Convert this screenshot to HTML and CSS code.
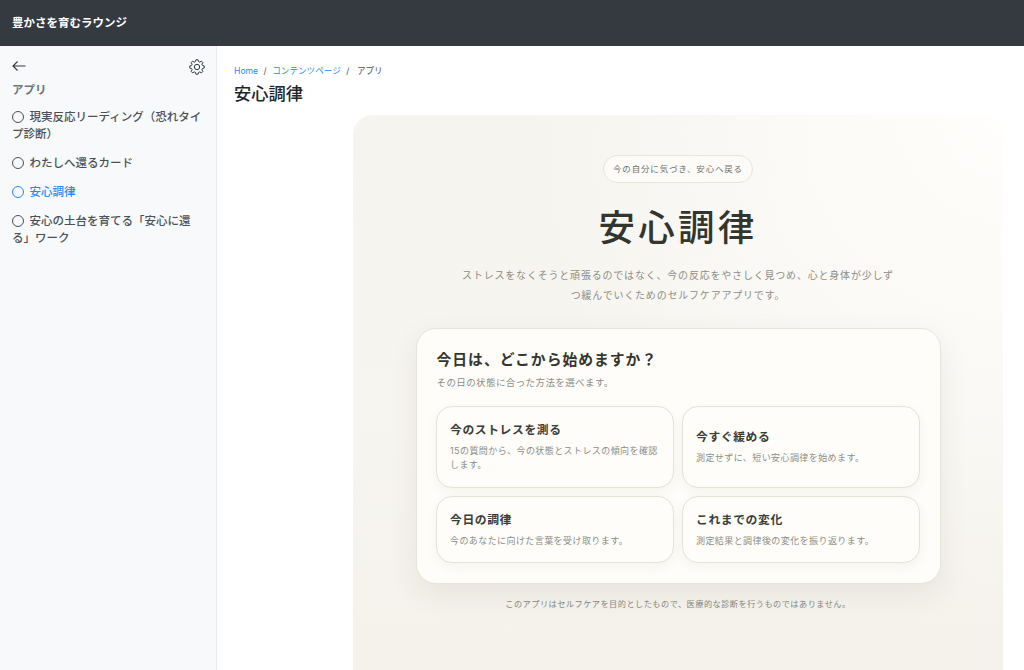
FILE: index.html
```html
<!DOCTYPE html>
<html lang="ja">
<head>
    <meta charset="UTF-8">
    <title>安心調律</title>
    <link rel="stylesheet" href="styles.css">
</head>
<body>
<header class="topbar">豊かさを育むラウンジ</header>
<div class="layout">
    <aside class="sidebar">
        <div class="side-tools">
            <svg class="icon-back" width="14" height="12" viewBox="0 0 14 12" fill="none" stroke="#343a40" stroke-width="1.1"><path d="M13.500 6H1M5.500 1.500L1 6l4.500 4.500"/></svg>
            <svg class="icon-gear" width="16" height="16" viewBox="0 0 16 16" fill="none" stroke="#343a40" stroke-width="1" stroke-linejoin="round"><circle cx="8" cy="8" r="2.700"/><path d="M6.900.8h2.200l.4 1.800 1.300.5 1.600-1 1.500 1.500-1 1.600.5 1.300 1.800.4v2.200l-1.800.4-.5 1.300 1 1.600-1.500 1.500-1.600-1-1.300.5-.4 1.800H6.900l-.4-1.800-1.300-.5-1.600 1-1.500-1.500 1-1.600-.5-1.300-1.800-.4V6.900l1.800-.4.5-1.300-1-1.600 1.500-1.500 1.600 1 1.300-.5z"/></svg>
        </div>
        <div class="side-title">アプリ</div>
        <ul class="side-menu">
            <li><span class="dot"></span>現実反応リーディング（恐れタイプ診断）</li>
            <li><span class="dot"></span>わたしへ還るカード</li>
            <li class="active"><span class="dot"></span>安心調律</li>
            <li><span class="dot"></span>安心の土台を育てる「安心に還る」ワーク</li>
        </ul>
    </aside>
    <main class="content">
        <div class="crumbs"><a>Home</a><span>/</span><a>コンテンツページ</a><span class="last">/</span>アプリ</div>
        <h2 class="page-title">安心調律</h2>
        <section class="panel">
            <div class="pill">今の自分に気づき、安心へ戻る</div>
            <h1 class="hero">安心調律</h1>
            <p class="lead">ストレスをなくそうと頑張るのではなく、今の反応をやさしく見つめ、心と身体が少しずつ緩んでいくためのセルフケアアプリです。</p>
            <div class="start">
                <h3>今日は、どこから始めますか？</h3>
                <p class="start-sub">その日の状態に合った方法を選べます。</p>
                <div class="choices">
                    <div class="choice"><h4>今のストレスを測る</h4><p>15の質問から、今の状態とストレスの傾向を確認します。</p></div>
                    <div class="choice"><h4>今すぐ緩める</h4><p>測定せずに、短い安心調律を始めます。</p></div>
                    <div class="choice"><h4>今日の調律</h4><p>今のあなたに向けた言葉を受け取ります。</p></div>
                    <div class="choice"><h4>これまでの変化</h4><p>測定結果と調律後の変化を振り返ります。</p></div>
                </div>
            </div>
            <p class="note">このアプリはセルフケアを目的としたもので、医療的な診断を行うものではありません。</p>
        </section>
    </main>
</div>
</body>
</html>
```

FILE: styles.css
```css
* {
    box-sizing: border-box;
}
html, body {
    height: 100%;
}
body {
    margin: 0;
    overflow: hidden;
    font-family: "Inter", "Noto Sans CJK JP", sans-serif;
    background-color: #fff;
    color: #343a40;
}
.topbar {
    height: 46px;
    padding: 0 12px;
    line-height: 46px;
    background-color: #343a40;
    color: #fff;
    font-size: 11.5px;
    font-weight: 700;
}
.layout {
    display: flex;
    height: 624px;
    overflow: hidden;
}
.sidebar {
    width: 217px;
    flex-shrink: 0;
    padding: 12px 11px 0 12px;
    background-color: #f8f9fa;
    border-right: 1px solid #e9ecef;
}
.side-tools {
    display: flex;
    justify-content: space-between;
    align-items: center;
    height: 16px;
}
.icon-gear {
    margin-top: 1px;
}
.side-title {
    margin-top: 6px;
    font-size: 11.5px;
    line-height: 20px;
    font-weight: 700;
    color: #6c757d;
}
.side-menu {
    list-style: none;
    margin: 3px 0 0;
    padding: 0;
    font-size: 11.5px;
    font-weight: 500;
    line-height: 17px;
    color: #495057;
}
.side-menu li {
    padding: 6px 0;
}
.side-menu .active {
    color: #2b87f5;
}
.dot {
    display: inline-block;
    width: 12px;
    height: 12px;
    margin-right: 5.5px;
    vertical-align: -1.5px;
    border: 1px solid currentColor;
    border-radius: 50%;
}
.content {
    flex: 1;
    min-width: 0;
    padding: 18px 21px 0 17px;
}
.crumbs {
    font-size: 8.6px;
    line-height: 14px;
    color: #495057;
}
.crumbs a {
    color: #2b87f5;
}
.crumbs span {
    margin: 0 5.5px;
}
.crumbs .last {
    margin-right: 7.5px;
}
.page-title {
    margin: 3px 0 0;
    font-size: 17.25px;
    line-height: 26px;
    font-weight: 500;
    color: #212529;
}
.panel {
    width: 650px;
    height: 600px;
    margin: 8px 0 0 auto;
    padding-top: 40px;
    border-radius: 20px 20px 0 0;
    background: radial-gradient(circle at 100% 0, #fffefc 0, rgba(255, 254, 252, 0) 55%), linear-gradient(180deg, #f6f4ef 0%, #f7f5f0 50%, #f4f1ea 100%);
    text-align: center;
}
.pill {
    display: inline-block;
    height: 28px;
    padding: 0 9px;
    border: 1px solid #e8e4dc;
    border-radius: 14px;
    background-color: #fcfbf8;
    font-size: 8.5px;
    line-height: 26px;
    letter-spacing: .82px;
    color: #6f706a;
}
.hero {
    margin: 16px 0 0;
    font-size: 36.5px;
    line-height: 58px;
    font-weight: 500;
    letter-spacing: 3.2px;
    color: #32362f;
}
.lead {
    width: 440px;
    margin: 8px auto 0;
    font-size: 10px;
    line-height: 20px;
    letter-spacing: .8px;
    color: #8c8d85;
}
.start {
    width: 525px;
    height: 256px;
    margin: 23px auto 0;
    padding: 20px 20px 20px 19px;
    text-align: left;
    border: 1px solid #e8e5de;
    border-radius: 20px;
    background-color: #fffdf9;
    box-shadow: 0 10px 30px rgba(60, 55, 40, 0.08);
}
.start h3 {
    margin: 0 0 0 1px;
    font-size: 14.8px;
    line-height: 22px;
    font-weight: 700;
    letter-spacing: 1px;
    color: #32362f;
}
.start-sub {
    margin: 3px 0 0 1px;
    font-size: 9.5px;
    line-height: 18px;
    letter-spacing: .4px;
    color: #8c8d85;
}
.choices {
    display: grid;
    grid-template-columns: 238px 238px;
    grid-template-rows: 82px 67px;
    gap: 8px;
    margin-top: 14px;
}
.choice {
    display: flex;
    flex-direction: column;
    justify-content: center;
    padding: 0 13.5px;
    border: 1px solid #e5e2da;
    border-radius: 16px;
    background-color: #fefdfa;
    box-shadow: 0 4px 12px rgba(60, 55, 40, 0.05);
}
.choice h4 {
    margin: 0;
    font-size: 11.8px;
    line-height: 17px;
    font-weight: 700;
    letter-spacing: .6px;
    color: #3b3d38;
}
.choice p {
    margin: 5px 0 0;
    font-size: 9px;
    line-height: 14px;
    letter-spacing: .42px;
    color: #8c8d85;
}
.note {
    margin: 13px 0 0;
    font-size: 8.2px;
    line-height: 14px;
    letter-spacing: .46px;
    color: #85867e;
}
```
